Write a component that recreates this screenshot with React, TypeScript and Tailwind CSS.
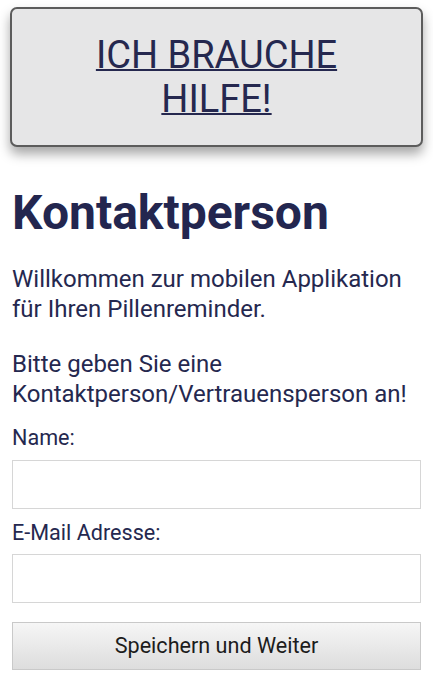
import React from "react";

export default function App() {
  return (
    <div
      className="w-[433px] h-[677px] overflow-hidden bg-white text-[#25284f]"
      style={{ fontFamily: "Roboto, 'Noto Sans', sans-serif" }}
    >
      <div className="mx-[10px] mt-[7px] h-[140px] rounded-[7px] border-2 border-[#5c5c5c] bg-[#e6e6e7] shadow-[0_7px_12px_rgba(0,0,0,0.35)] flex items-center justify-center">
        <a
          href="#"
          className="text-[38px] leading-[44px] text-center text-[#25284f] underline decoration-[2px]"
        >
          ICH BRAUCHE
          <br />
          HILFE!
        </a>
      </div>

      <div className="px-3">
        <h1 className="mt-[42px] text-[48px] leading-[48px] font-bold text-[#23264f]">
          Kontaktperson
        </h1>
        <p className="mt-[27px] text-[24px] leading-[30px]">
          Willkommen zur mobilen Applikation für Ihren Pillenreminder.
        </p>
        <p className="mt-[25px] text-[24px] leading-[30px]">
          Bitte geben Sie eine Kontaktperson/Vertrauensperson an!
        </p>
        <label className="block mt-[16px] text-[21.6px] leading-[26px]">Name:</label>
        <input
          type="text"
          className="block mt-[9px] w-full h-[49px] border border-[#d6d6d6] bg-white outline-none"
        />
        <label className="block mt-[11px] text-[21.6px] leading-[26px]">E-Mail Adresse:</label>
        <input
          type="email"
          className="block mt-[8px] w-full h-[49px] border border-[#d6d6d6] bg-white outline-none"
        />
        <button
          type="button"
          className="block mt-[19px] w-full h-[48px] border border-[#c9c9c9] bg-gradient-to-b from-[#f6f6f6] to-[#dddddd] text-[21.6px] text-[#1c1c1c]"
        >
          Speichern und Weiter
        </button>
      </div>
    </div>
  );
}
